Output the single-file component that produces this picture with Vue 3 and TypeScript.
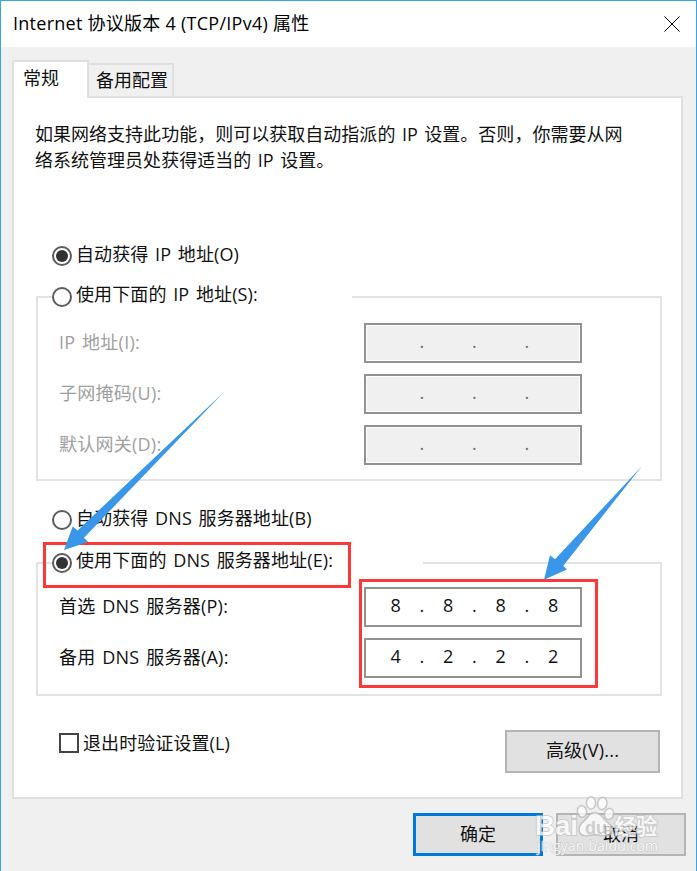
<script setup lang="ts">
interface Row {
  label: string
  octets: string[]
}

const ipRows: Row[] = [
  { label: 'IP 地址(I):', octets: ['', '', '', ''] },
  { label: '子网掩码(U):', octets: ['', '', '', ''] },
  { label: '默认网关(D):', octets: ['', '', '', ''] },
]

const dnsRows: Row[] = [
  { label: '首选 DNS 服务器(P):', octets: ['8', '8', '8', '8'] },
  { label: '备用 DNS 服务器(A):', octets: ['4', '2', '2', '2'] },
]

const cells = (octets: string[]): string[] =>
  octets.flatMap((o, i) => (i === 0 ? [o] : ['.', o]))
</script>

<template>
  <div class="window">
    <header class="titlebar">
      <span class="title">Internet 协议版本 4 (TCP/IPv4) 属性</span>
      <svg class="close" width="16" height="16" viewBox="0 0 16 16">
        <path d="M0.5 0.5L15.5 15.5M15.5 0.5L0.5 15.5" stroke="#000" stroke-width="1" fill="none" />
      </svg>
    </header>

    <nav class="tabs">
      <div class="tab active">常规</div>
      <div class="tab">备用配置</div>
    </nav>

    <main class="panel">
      <p class="intro">如果网络支持此功能，则可以获取自动指派的 IP 设置。否则，你需要从网<br />络系统管理员处获得适当的 IP 设置。</p>

      <div class="option auto-ip">
        <span class="radio checked"></span>
        <span class="text">自动获得 IP 地址(O)</span>
      </div>

      <section class="group ip">
        <div class="option legend">
          <span class="radio"></span>
          <span class="text">使用下面的 IP 地址(S):</span>
        </div>
        <div v-for="row in ipRows" :key="row.label" class="row disabled">
          <span class="label">{{ row.label }}</span>
          <div class="field">
            <span v-for="(c, i) in cells(row.octets)" :key="i">{{ c }}</span>
          </div>
        </div>
      </section>

      <div class="option auto-dns">
        <span class="radio"></span>
        <span class="text">自动获得 DNS 服务器地址(B)</span>
      </div>

      <section class="group dns">
        <div class="option legend">
          <span class="radio checked"></span>
          <span class="text">使用下面的 DNS 服务器地址(E):</span>
        </div>
        <div v-for="row in dnsRows" :key="row.label" class="row">
          <span class="label">{{ row.label }}</span>
          <div class="field">
            <span v-for="(c, i) in cells(row.octets)" :key="i">{{ c }}</span>
          </div>
        </div>
      </section>

      <div class="bottom">
        <div class="validate">
          <span class="checkbox"></span>
          <span class="text">退出时验证设置(L)</span>
        </div>
        <div class="button advanced">高级(V)...</div>
      </div>
    </main>

    <footer class="actions">
      <div class="button primary">确定</div>
      <div class="button cancel">取消</div>
    </footer>

    <svg class="overlay" width="697" height="871" viewBox="0 0 697 871">
      <g fill="none" stroke="#fd3838" stroke-width="3">
        <rect x="44.5" y="543.5" width="305" height="43" />
        <rect x="360.5" y="580.5" width="236" height="106" />
      </g>
      <g fill="#3996e8">
        <path d="M64 550L72.7 526.5L77.5 530.5L224 392L84 537.7L88 542Z" />
        <path d="M544 579.7L550 555.3L555 559.3L642 466L563.3 565.7L566.8 569.4Z" />
      </g>
      <g class="watermark" fill="#fff" stroke="#bdbdbd" stroke-width="1.6" opacity="0.75">
        <ellipse cx="582" cy="811.5" rx="4.6" ry="5.8" transform="rotate(-12 582 811.5)" />
        <ellipse cx="591" cy="803" rx="4.6" ry="6.2" />
        <ellipse cx="602.3" cy="803.5" rx="4.6" ry="6.2" transform="rotate(10 602.3 803.5)" />
        <ellipse cx="609" cy="814" rx="4.6" ry="5.6" transform="rotate(15 609 814)" />
        <path
          d="M595 812.5C600 812.5 602 817 606 821C611 825 613 827 612 831C611 836 606 836.5 602 835.5C598 834.8 592 834.8 588 835.5C582 836.5 579 834 579 829C579 824 585 821 588 816.5C590 813.8 592 812.5 595 812.5Z"
        />
        <text class="bai" x="535" y="835" font-size="27" font-weight="700" textLength="43" lengthAdjust="spacingAndGlyphs">Bai</text>
        <text class="du" x="585" y="833.5" font-size="18" font-weight="700" textLength="22" lengthAdjust="spacingAndGlyphs">du</text>
        <text x="614.5" y="834" font-size="21.5" font-weight="700">经验</text>
        <text x="537" y="851" font-size="14" textLength="121" stroke-width="1">jingyan.baidu.com</text>
      </g>
    </svg>
  </div>
</template>

<style>
body {
  margin: 0;
}
</style>

<style scoped>
.window {
  position: relative;
  box-sizing: border-box;
  width: 697px;
  height: 871px;
  overflow: hidden;
  border: 1px solid #38a3e8;
  border-bottom: 0;
  background: #f0f0f0;
  color: #111;
  font: 18px/26px 'Open Sans', 'Noto Sans CJK SC', sans-serif;
  word-spacing: 1.8px;
  white-space: nowrap;
}
.titlebar {
  display: flex;
  align-items: center;
  justify-content: space-between;
  height: 46px;
  padding: 0 17px 0 12px;
  background: #fff;
  color: #000;
}
.title {
  margin-top: -2px;
  word-spacing: 0;
  letter-spacing: 0.26px;
}
.close {
  margin-right: -1px;
}
.tabs {
  display: flex;
  align-items: flex-end;
  height: 37px;
  margin: 13px 0 -1px 11px;
}
.tab {
  box-sizing: border-box;
  height: 34px;
  padding: 2px 4px 0 7px;
  border: 2px solid #dfdfdf;
  border-left: 0;
  border-bottom: 0;
}
.tab.active {
  position: relative;
  width: 77px;
  height: 37px;
  padding: 3px 0 0 9px;
  border-left: 2px solid #dfdfdf;
  background: #fff;
}
.tab.active::after {
  content: '';
  position: absolute;
  left: 0;
  right: 0;
  bottom: -2px;
  height: 2px;
  background: #fff;
}
.panel {
  box-sizing: border-box;
  display: flex;
  flex-direction: column;
  width: 671px;
  height: 703px;
  margin-left: 11px;
  padding: 24px 20px 0 22px;
  border: 2px solid #dfdfdf;
  background: #fff;
}
.intro {
  margin: -1px 0 1px -1px;
  letter-spacing: 0.02px;
}
.option {
  display: flex;
  align-items: center;
  height: 20px;
}
.option .text {
  margin: -4px 0 0 4px;
  letter-spacing: 0.12px;
}
.option.legend .text {
  margin-top: -6px;
}
.radio {
  display: flex;
  align-items: center;
  justify-content: center;
  box-sizing: border-box;
  width: 20px;
  height: 20px;
  border: 2px solid #5c5c5c;
  border-radius: 50%;
  background: #fff;
}
.radio.checked::after {
  content: '';
  width: 12px;
  height: 12px;
  border-radius: 50%;
  background: #333;
}
.auto-ip {
  margin: 72px 0 0 16px;
}
.group {
  box-sizing: border-box;
  width: 626px;
  margin-top: 30px;
  border: 2px solid #e3e3e3;
}
.group.ip {
  height: 185px;
}
.auto-dns {
  margin: 29px 0 0 16px;
}
.group.dns {
  height: 134px;
  margin-top: 32px;
}
.legend {
  width: 300px;
  margin: -11px 0 16px 14px;
  background: #fff;
}
.dns .legend {
  width: 371px;
  margin-bottom: 14px;
}
.row {
  display: flex;
  justify-content: space-between;
  height: 39px;
  margin: 0 78px 12px 21px;
}
.label {
  padding-top: 6px;
  letter-spacing: 0.25px;
}
.disabled .label {
  color: #a0a0a0;
}
.field {
  box-sizing: border-box;
  display: grid;
  grid-template-columns: repeat(7, 26.25px);
  width: 218px;
  height: 40px;
  padding: 3px 0 0 16.5px;
  border: 2px solid #929292;
  background: #fff;
  text-align: center;
}
.disabled .field {
  background: #f0f0f0;
  box-shadow: inset 0 0 0 1px #fff;
  color: #6d6d6d;
}
.bottom {
  display: flex;
  justify-content: space-between;
  margin: 34px 1px 0 23px;
}
.validate {
  display: flex;
  align-items: center;
  height: 26px;
  letter-spacing: 0.08px;
}
.checkbox {
  box-sizing: border-box;
  width: 20px;
  height: 20px;
  margin-right: 4px;
  border: 2px solid #444;
}
.button {
  box-sizing: border-box;
  height: 43px;
  border: 2px solid #b4b4b4;
  background: #e1e1e1;
  line-height: 38px;
  text-align: center;
}
.advanced {
  width: 155px;
  line-height: 36px;
  letter-spacing: 0.2px;
}
.actions {
  display: flex;
  justify-content: flex-end;
  gap: 13px;
  margin: 14px 10px 0 0;
}
.actions .button {
  width: 130px;
}
.actions .primary {
  border: 3px solid #0078d7;
  line-height: 36px;
}
.overlay {
  position: absolute;
  left: -1px;
  top: -1px;
}
.watermark text {
  word-spacing: 0;
  paint-order: stroke;
}
.watermark .bai,
.watermark .du {
  font-family: 'Liberation Sans', sans-serif;
}
.watermark .du {
  fill: #c8c8c8;
  stroke: none;
}
</style>
